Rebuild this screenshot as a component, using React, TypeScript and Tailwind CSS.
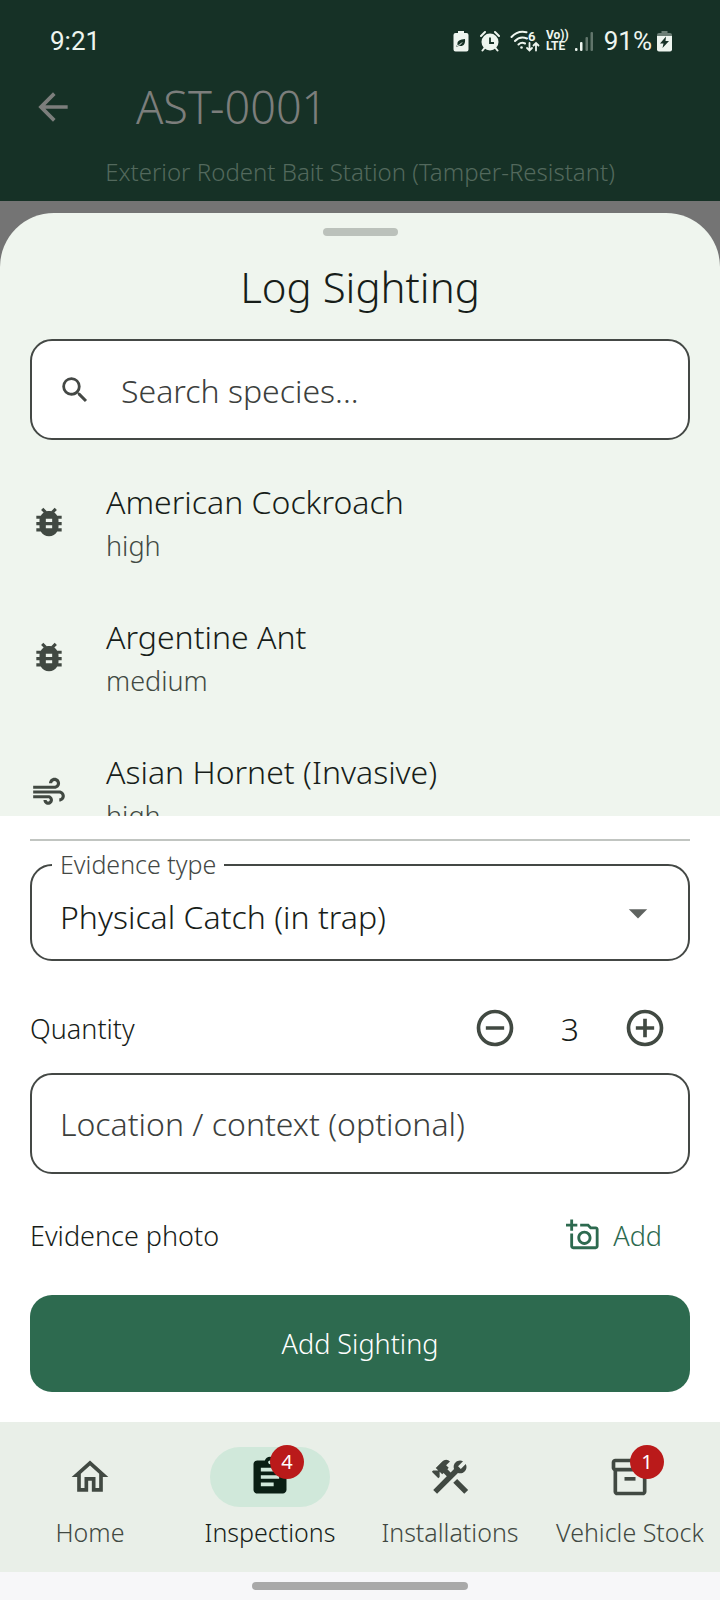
import React, { useState } from 'react'
import type { IconType } from 'react-icons'
import {
	MdAddCircleOutline,
	MdAir,
	MdArrowBack,
	MdArrowDropDown,
	MdAssignment,
	MdBugReport,
	MdConstruction,
	MdOutlineAddAPhoto,
	MdOutlineHome,
	MdOutlineInventory2,
	MdRemoveCircleOutline,
	MdSearch
} from 'react-icons/md'

interface Species {
	name: string
	risk: string
	icon: IconType
}

interface NavItem {
	label: string
	icon: IconType
	active?: boolean
	badge?: number
}

const SPECIES: Species[] = [
	{ name: 'American Cockroach', risk: 'high', icon: MdBugReport },
	{ name: 'Argentine Ant', risk: 'medium', icon: MdBugReport },
	{ name: 'Asian Hornet (Invasive)', risk: 'high', icon: MdAir }
]

const NAV_ITEMS: NavItem[] = [
	{ label: 'Home', icon: MdOutlineHome },
	{ label: 'Inspections', icon: MdAssignment, active: true, badge: 4 },
	{ label: 'Installations', icon: MdConstruction },
	{ label: 'Vehicle Stock', icon: MdOutlineInventory2, badge: 1 }
]

const StatusBar: React.FC = () => (
	<div className="flex h-[72px] items-center justify-between pt-2.5 pr-12 pl-[50px] font-[Roboto,sans-serif] text-[26px] leading-8 font-normal text-[#eef5ef]">
		<span>9:21</span>
		<div className="flex items-center">
			{/* Battery saver */}
			<svg className="mr-[11px] h-[22px] w-4" viewBox="0 0 16 22" fill="none">
				<path d="M5 1h6v2h2.500a2 2 0 0 1 2 2v14.500a2 2 0 0 1-2 2h-11a2 2 0 0 1-2-2V5a2 2 0 0 1 2-2H5z" fill="currentColor" />
				<path d="M4.500 14.500c-.5-4 2.500-5 7.500-5.500.5 4.500-1 7.500-5.500 7-1 0-2 .5-3.500.5z" fill="#163126" />
				<path d="M4 15.500c2 0 3.500-1 5-3" stroke="currentColor" strokeWidth="1" />
			</svg>
			{/* Alarm */}
			<svg className="mr-2.5 h-[22px] w-5" viewBox="0 0 20 22" fill="none">
				<circle cx="10" cy="12" r="8.500" fill="currentColor" />
				<path d="M1 6l4-4M19 6l-4-4M4.500 18l-2 2.500M15.500 18l2 2.500" stroke="currentColor" strokeWidth="2" strokeLinecap="round" />
				<path d="M10 7.500V13h4" stroke="#163126" strokeWidth="1.800" />
			</svg>
			{/* Wi-Fi 6 */}
			<svg className="mr-1.5 h-[22px] w-[30px]" viewBox="0 0 30 22" fill="none" stroke="currentColor" strokeWidth="2" strokeLinecap="round">
				<path d="M1.500 7C5.500 2.500 11 1 16.500 2.200M5 11c3-3.300 7.500-4.300 12-2.500M8.500 14.500c2-1.800 4.500-2 6.500-1" />
				<circle cx="11.500" cy="17.500" r="1.300" fill="currentColor" stroke="none" />
				<path d="M19.500 13v7M17 18l2.500 2.500L22 18M26 20.500v-7M23.500 15.500L26 13l2.500 2.500" strokeWidth="1.800" />
				<text x="18" y="10.500" fontSize="13" fontWeight="700" fill="currentColor" stroke="none">6</text>
			</svg>
			<span className="mr-1.5 flex flex-col text-[12px] leading-[11px] font-bold">
				<span>Vo))</span>
				<span>LTE</span>
			</span>
			{/* Signal */}
			<svg className="mr-2.5 h-[22px] w-[19px]" viewBox="0 0 19 22" fill="currentColor">
				<rect x="0" y="18" width="2.500" height="3" rx="1" />
				<rect x="5" y="12" width="2.500" height="9" rx="1" />
				<rect x="10.500" y="7" width="2.500" height="14" rx="1" opacity=".35" />
				<rect x="15.500" y="2" width="2.500" height="19" rx="1" opacity=".35" />
			</svg>
			<span>91%</span>
			{/* Charging */}
			<svg className="ml-[5px] h-[22px] w-[15px]" viewBox="0 0 15 22" fill="currentColor">
				<path d="M4.500 1h6v2H13a2 2 0 0 1 2 2v2H0V5a2 2 0 0 1 2-2h2.500z" opacity=".4" />
				<path d="M0 6h15v13.500a2 2 0 0 1-2 2H2a2 2 0 0 1-2-2z" />
				<path d="M9 6.500L3 13.500h3.500L5.500 18l6.500-7H8.500z" fill="#163126" />
			</svg>
		</div>
	</div>
)

const SpeciesRow: React.FC<{ species: Species }> = ({ species }) => {
	const Icon = species.icon
	return (
		<li>
			<button type="button" className="flex h-[135px] w-full items-center gap-[38px] px-[30px] text-left">
				<Icon size={38} className="shrink-0 text-[#414942]" />
				<span className="flex flex-col pt-1">
					<span className="text-[32px] leading-[44px] text-[#171d19]">{species.name}</span>
					<span className="text-[27px] leading-[44px] text-[#414942]">{species.risk}</span>
				</span>
			</button>
		</li>
	)
}

const BottomNav: React.FC = () => (
	<nav className="flex h-[150px] shrink-0 bg-[#e9efe8] pt-[25px]">
		{NAV_ITEMS.map(({ label, icon: Icon, active, badge }) => (
			<a
				key={label}
				href="#"
				aria-current={active ? 'page' : undefined}
				className={`flex flex-1 flex-col items-center gap-[7px] text-[25px] leading-9 whitespace-nowrap ${active ? 'text-[#171d19]' : 'text-[#414942]'}`}
			>
				<span className={`flex h-[60px] w-[120px] items-center justify-center rounded-full ${active ? 'bg-[#d0e8da] text-[#0a1f14]' : ''}`}>
					<span className="relative">
						<Icon size={44} />
						{badge && (
							<span className="absolute -top-2.5 left-1/2 flex size-[34px] items-center justify-center rounded-full bg-[#ba1a1a] text-xl font-normal text-white">
								{badge}
							</span>
						)}
					</span>
				</span>
				<span>{label}</span>
			</a>
		))}
	</nav>
)

export default function App() {
	const [quantity, setQuantity] = useState(3)
	const [query, setQuery] = useState('')

	return (
		<div className="flex h-screen flex-col bg-[#747474] font-['Noto_Sans',sans-serif] font-light text-[#171d19]">
			{/* Header */}
			<header className="h-[201px] shrink-0 bg-[#163126]">
				<StatusBar />
				<div className="flex h-[70px] items-center gap-[61px] pl-[31px] text-[#7c7e7c]">
					<button type="button" aria-label="Back">
						<MdArrowBack size={44} />
					</button>
					<h1 className="text-[45px] leading-[60px]">AST-0001</h1>
				</div>
				<p className="pt-3 text-center text-2xl leading-9 text-[#53695d]">
					Exterior Rodent Bait Station (Tamper-Resistant)
				</p>
			</header>

			{/* Sheet */}
			<main className="mt-3 flex min-h-0 flex-1 flex-col overflow-hidden rounded-t-[54px] bg-[#eff5ee]">
				<div className="mx-auto mt-[15px] h-2 w-[75px] shrink-0 rounded-full bg-[#bbc1bb]" />
				<h2 className="mt-5 text-center text-[42px] leading-[62px]">Log Sighting</h2>

				<label className="mx-[30px] mt-[21px] flex h-[101px] shrink-0 items-center gap-[29px] rounded-[22px] border-2 border-[#444845] bg-white pl-[26px] text-[#444845]">
					<MdSearch size={34} className="shrink-0" />
					<input
						type="text"
						aria-label="Search species"
						placeholder="Search species..."
						value={query}
						onChange={e => setQuery(e.target.value)}
						className="min-w-0 flex-1 bg-transparent pt-0.5 text-[32px] leading-[44px] outline-none placeholder:text-[#3c403d]"
					/>
				</label>

				<ul className="mt-3.5 min-h-0 flex-1 overflow-y-auto [scrollbar-width:none]">
					{SPECIES.map(species => (
						<SpeciesRow key={species.name} species={species} />
					))}
				</ul>

				{/* Form */}
				<form className="shrink-0 bg-white px-[30px] pt-[23px] pb-[30px]" onSubmit={e => e.preventDefault()}>
					<hr className="border-t-2 border-[#c1c5c1]" />
					<div className="relative mt-[23px]">
						<label htmlFor="evidence" className="absolute -top-[18px] left-[22px] bg-white px-2 text-[25px] leading-9 text-[#444845]">
							Evidence type
						</label>
						<select
							id="evidence"
							className="h-[97px] w-full appearance-none rounded-[22px] border-2 border-[#444845] bg-transparent px-7 pt-2 text-[32px] outline-none"
						>
							<option>Physical Catch (in trap)</option>
						</select>
						<MdArrowDropDown size={44} className="pointer-events-none absolute top-[27px] right-[30px] text-[#5f6360]" />
					</div>

					<div className="mt-[22px] flex h-[90px] items-center justify-between pr-[23px] text-[27px] leading-10">
						<span className="pt-0.5">Quantity</span>
						<div className="flex items-center text-[#414942]">
							<button type="button" aria-label="Decrease quantity" onClick={() => setQuantity(Math.max(1, quantity - 1))}>
								<MdRemoveCircleOutline size={44} />
							</button>
							<output className="w-[106px] pt-0.5 text-center text-[32px] text-[#171d19]">{quantity}</output>
							<button type="button" aria-label="Increase quantity" onClick={() => setQuantity(quantity + 1)}>
								<MdAddCircleOutline size={44} />
							</button>
						</div>
					</div>

					<input
						type="text"
						aria-label="Location / context (optional)"
						placeholder="Location / context (optional)"
						className="block h-[101px] w-full rounded-[22px] border-2 border-[#444845] bg-transparent px-7 text-[32px] outline-none placeholder:text-[#3c403d]"
					/>

					<div className="flex h-[121px] items-center justify-between text-[27px] leading-10">
						<span className="pt-0.5">Evidence photo</span>
						<button type="button" className="flex items-center gap-[13px] pr-7 text-[#2d6a4f]">
							<MdOutlineAddAPhoto size={34} />
							<span className="pt-0.5">Add</span>
						</button>
					</div>

					<button type="submit" className="h-[97px] w-full rounded-[22px] bg-[#2d6a4f] pt-0.5 text-[27px] text-white">
						Add Sighting
					</button>
				</form>
			</main>

			<BottomNav />

			{/* Gesture bar */}
			<div className="flex h-7 shrink-0 justify-center bg-[#f7f7f9] pt-2.5">
				<div className="h-2 w-[216px] rounded-full bg-[#a9a9a9]" />
			</div>
		</div>
	)
}
